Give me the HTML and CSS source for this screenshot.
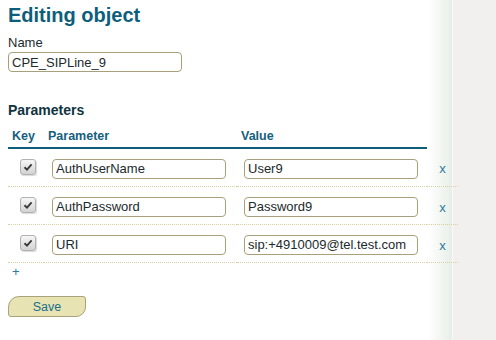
FILE: index.html
```html
<!DOCTYPE html>
<html>
<head>
    <title>Editing object</title>
    <link rel="stylesheet" href="styles.css">
</head>
<body>
    <div class="page">
        <h1>Editing object</h1>

        <label class="field-label" for="name">Name</label>
        <input type="text" id="name" class="name-input" value="CPE_SIPLine_9">

        <h2>Parameters</h2>

        <table class="params">
            <colgroup>
                <col class="col-key">
                <col class="col-param">
                <col class="col-value">
                <col class="col-del">
            </colgroup>
            <thead>
                <tr>
                    <th>Key</th>
                    <th>Parameter</th>
                    <th>Value</th>
                    <th class="th-del"></th>
                </tr>
            </thead>
            <tbody>
                <tr>
                    <td class="cell-key"><span class="check"><svg viewBox="0 0 16 16" width="16" height="16"><path d="M4.5 8.2 L7 10.6 L11.6 5.4" fill="none" stroke="#3a3a3a" stroke-width="1.9"/></svg></span></td>
                    <td class="cell-param"><input type="text" value="AuthUserName"></td>
                    <td class="cell-value"><input type="text" value="User9"></td>
                    <td class="cell-del"><a href="#">x</a></td>
                </tr>
                <tr>
                    <td class="cell-key"><span class="check"><svg viewBox="0 0 16 16" width="16" height="16"><path d="M4.5 8.2 L7 10.6 L11.6 5.4" fill="none" stroke="#3a3a3a" stroke-width="1.9"/></svg></span></td>
                    <td class="cell-param"><input type="text" value="AuthPassword"></td>
                    <td class="cell-value"><input type="text" value="Password9"></td>
                    <td class="cell-del"><a href="#">x</a></td>
                </tr>
                <tr>
                    <td class="cell-key"><span class="check"><svg viewBox="0 0 16 16" width="16" height="16"><path d="M4.5 8.2 L7 10.6 L11.6 5.4" fill="none" stroke="#3a3a3a" stroke-width="1.9"/></svg></span></td>
                    <td class="cell-param"><input type="text" value="URI"></td>
                    <td class="cell-value"><input type="text" value="sip:+4910009@tel.test.com"></td>
                    <td class="cell-del"><a href="#">x</a></td>
                </tr>
            </tbody>
        </table>

        <div class="add-row"><a href="#">+</a></div>

        <button class="save">Save</button>
    </div>
</body>
</html>
```

FILE: styles.css
```css
body {
    margin: 0;
    background-color: #f1f0ee;
    font-family: "Liberation Sans", Arial, sans-serif;
    color: #222;
}

.page {
    box-sizing: border-box;
    width: 453px;
    min-height: 340px;
    padding: 4px 8px;
    background: linear-gradient(to right, #fff 0, #fff 428px, #e8eee7 452px);
    border-right: 1px solid #f8f8f6;
}

h1 {
    margin: 0 0 8px 0;
    font-size: 20px;
    line-height: 23px;
    color: #0d5e7b;
}

.field-label {
    display: block;
    font-size: 13px;
    line-height: 15px;
    color: #1d2a2e;
}

input[type="text"] {
    box-sizing: border-box;
    height: 20px;
    padding: 0 3px;
    border: 1px solid #a8a07c;
    border-radius: 4px;
    font-family: "Liberation Sans", Arial, sans-serif;
    font-size: 13px;
    color: #1c2a2c;
    background: #fff;
}

.name-input {
    display: block;
    margin-top: 2px;
    width: 174px;
}

h2 {
    margin: 30px 0 0 0;
    font-size: 14px;
    line-height: 16px;
    color: #0f3440;
}

.params {
    table-layout: fixed;
    border-collapse: collapse;
    width: 450px;
}

.col-key { width: 36px; }
.col-param { width: 193px; }
.col-value { width: 190px; }
.col-del { width: 31px; }

.params th {
    padding: 11px 0 4px 4px;
    text-align: left;
    font-size: 12.5px;
    line-height: 14px;
    color: #15607e;
    border-bottom: 2px solid #0d5e7b;
}

.params th.th-del {
    border-bottom: none;
}

.params td {
    height: 35px;
    padding: 2px 0 0 0;
    border-bottom: 1px dotted #d6d0a2;
}

.cell-key {
    text-align: center;
}

.check {
    display: inline-block;
    box-sizing: border-box;
    width: 16px;
    height: 16px;
    margin: -4px 0 0 4px;
    vertical-align: middle;
    border: 1px solid #b2b2b2;
    border-radius: 3px;
    background: linear-gradient(#f7f7f7, #d2d2d2);
    box-shadow: 1px 1px 1px rgba(0, 0, 0, 0.15);
}

.check svg {
    display: block;
    margin: -1px;
}

.cell-param {
    padding-left: 8px !important;
}

.cell-param input {
    width: 174px;
}

.cell-value {
    padding-left: 7px !important;
}

.cell-value input {
    width: 174px;
}

.cell-del {
    text-align: center;
}

.cell-del a,
.add-row a {
    color: #2a7c9c;
    text-decoration: none;
    font-size: 13px;
}

.add-row {
    padding: 1px 0 0 4px;
    line-height: 14px;
}

.save {
    display: block;
    margin-top: 17px;
    width: 78px;
    height: 21px;
    padding: 0;
    border: 1px solid #aaa27a;
    border-radius: 11px 3px 10px 3px;
    background-color: #e7e3b3;
    font-family: "Liberation Sans", Arial, sans-serif;
    font-size: 12.5px;
    color: #21708a;
    cursor: pointer;
}
```
